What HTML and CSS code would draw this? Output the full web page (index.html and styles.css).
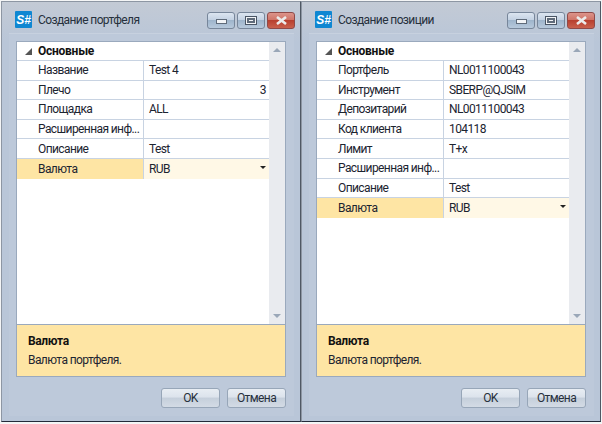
FILE: index.html
```html
<!DOCTYPE html>
<html lang="ru">
<head>
<meta charset="utf-8">
<title>Создание</title>
<link rel="stylesheet" href="styles.css">
</head>
<body>
<div class="desktop">
  <section class="window">
    <header class="titlebar">
      <svg class="logo" width="17" height="17" viewBox="0 0 17 17"><rect width="17" height="17" rx="1" fill="#0f87d2"/><text x="8.5" y="13" text-anchor="middle" class="logo-text">S#</text></svg>
      <span class="title">Создание портфеля</span>
      <span class="winbtn"><i class="glyph-min"></i></span>
      <span class="winbtn"><i class="glyph-max"></i></span>
      <span class="winbtn close"><svg width="13" height="9" viewBox="0 0 13 9"><path d="M2 1l9 7M11 1l-9 7" stroke="#ececec" stroke-width="2.6" fill="none"/></svg></span>
    </header>
    <div class="client">
      <div class="panel">
        <div class="grid-area">
          <div class="rows">
            <div class="group"><svg class="tri" width="7" height="7" viewBox="0 0 7 7"><path d="M7 0v7H0z" fill="#555"/></svg>Основные</div>
            <div class="row"><span class="k">Название</span><span class="v">Test 4</span></div>
            <div class="row"><span class="k">Плечо</span><span class="v right">3</span></div>
            <div class="row"><span class="k">Площадка</span><span class="v">ALL</span></div>
            <div class="row"><span class="k">Расширенная инф...</span><span class="v"></span></div>
            <div class="row"><span class="k">Описание</span><span class="v">Test</span></div>
            <div class="row selected"><span class="k">Валюта</span><span class="v">RUB<i class="caret"></i></span></div>
          </div>
          <div class="scrollbar"><i class="up"></i><i class="down"></i></div>
        </div>
        <div class="help"><b>Валюта</b><span>Валюта портфеля.</span></div>
      </div>
      <footer class="buttons"><button class="btn">OK</button><button class="btn">Отмена</button></footer>
    </div>
  </section>
  <section class="window">
    <header class="titlebar">
      <svg class="logo" width="17" height="17" viewBox="0 0 17 17"><rect width="17" height="17" rx="1" fill="#0f87d2"/><text x="8.5" y="13" text-anchor="middle" class="logo-text">S#</text></svg>
      <span class="title">Создание позиции</span>
      <span class="winbtn"><i class="glyph-min"></i></span>
      <span class="winbtn"><i class="glyph-max"></i></span>
      <span class="winbtn close"><svg width="13" height="9" viewBox="0 0 13 9"><path d="M2 1l9 7M11 1l-9 7" stroke="#ececec" stroke-width="2.6" fill="none"/></svg></span>
    </header>
    <div class="client">
      <div class="panel">
        <div class="grid-area">
          <div class="rows">
            <div class="group"><svg class="tri" width="7" height="7" viewBox="0 0 7 7"><path d="M7 0v7H0z" fill="#555"/></svg>Основные</div>
            <div class="row"><span class="k">Портфель</span><span class="v">NL0011100043</span></div>
            <div class="row"><span class="k">Инструмент</span><span class="v">SBERP@QJSIM</span></div>
            <div class="row"><span class="k">Депозитарий</span><span class="v">NL0011100043</span></div>
            <div class="row"><span class="k">Код клиента</span><span class="v">104118</span></div>
            <div class="row"><span class="k">Лимит</span><span class="v">T+x</span></div>
            <div class="row"><span class="k">Расширенная инф...</span><span class="v"></span></div>
            <div class="row"><span class="k">Описание</span><span class="v">Test</span></div>
            <div class="row selected"><span class="k">Валюта</span><span class="v">RUB<i class="caret"></i></span></div>
          </div>
          <div class="scrollbar"><i class="up"></i><i class="down"></i></div>
        </div>
        <div class="help"><b>Валюта</b><span>Валюта портфеля.</span></div>
      </div>
      <footer class="buttons"><button class="btn">OK</button><button class="btn">Отмена</button></footer>
    </div>
  </section>
</div>
</body>
</html>
```
FILE: styles.css
```css
* { box-sizing: border-box; }
html, body { margin: 0; padding: 0; }
body {
  width: 602px;
  height: 424px;
  overflow: hidden;
  background: #f4f5f6;
  font-family: Roboto, "Open Sans", sans-serif;
  font-size: 12px;
  letter-spacing: -0.6px;
  color: #1c2430;
}
.desktop { display: flex; padding: 1px 0 0 1px; }
.window {
  width: 300px;
  height: 421px;
  flex: none;
  display: flex;
  flex-direction: column;
  padding: 0 6px 5px 7px;
  background: linear-gradient(#c3cad5 0, #b9c6d8 40px);
  border: 1px solid #4f5864;
  border-left-color: #8d96a3;
  border-top-color: #8d96a3;
  border-bottom-color: #232a3a;
}
.titlebar {
  height: 31px;
  display: flex;
  align-items: center;
  flex: none;
  padding: 0 0 0 6px;
}
.logo { flex: none; margin-top: 4px; }
.logo-text { font: italic bold 12px "Liberation Sans", sans-serif; letter-spacing: 0; fill: #fff; }
.title { margin-left: 6px; margin-right: auto; margin-top: 5px; font-size: 12px; color: #26303c; }
.winbtn {
  width: 28px;
  height: 17px;
  flex: none;
  margin-left: 2px;
  margin-top: 5px;
  border: 1px solid #77869a;
  border-radius: 3px;
  display: flex;
  align-items: center;
  justify-content: center;
  background: linear-gradient(#dce5f0 0, #c4d2e3 45%, #9fb5cc 50%, #b7c9dc 100%);
}
.winbtn.close {
  margin-right: -1px;
  border-color: #8f4a48;
  background: linear-gradient(#dc938a 0, #cf7569 45%, #b8402f 50%, #c9604c 100%);
}
.glyph-min { display: block; width: 11px; height: 5px; margin-top: 3px; background: #f2f4f7; border: 1px solid #5f6b7a; }
.glyph-max { display: block; width: 12px; height: 9px; background: #f2f4f7; border: 1px solid #4a5666; box-shadow: inset 0 0 0 1px #f2f4f7, inset 0 0 0 3px #5f6b7a; }
.client {
  flex: 1;
  display: flex;
  flex-direction: column;
  padding: 7px 8px 0 7px;
  background: #bdc9da;
  border-top: 1px solid #c7d1df;
  min-height: 0;
}
.panel {
  height: 336px;
  flex: none;
  display: flex;
  flex-direction: column;
  border: 1px solid #9aa9bd;
  background: #fff;
}
.grid-area { flex: 1; display: flex; min-height: 0; }
.rows { flex: 1; min-width: 0; }
.group {
  height: 19px;
  display: flex;
  align-items: center;
  font-weight: 700;
  letter-spacing: -0.25px;
  color: #111;
  border-bottom: 1px solid #c8d3e2;
}
.tri { margin: 0 6px 0 8px; }
.row {
  height: 19.6px;
  display: flex;
  align-items: center;
  border-bottom: 1px solid #c8d3e2;
}
.k { width: 126px; padding-left: 21px; height: 100%; display: flex; align-items: center; white-space: nowrap; flex: none; }
.v { flex: 1; height: 100%; display: flex; align-items: center; padding: 0 3px 0 5px; border-left: 1px solid #c8d3e2; position: relative; }
.v.right { justify-content: flex-end; }
.selected { border-bottom: 0; }
.selected .k { background: #fee5a4; }
.selected .v { background: #fff8e6; }
.caret { position: absolute; right: 3px; top: 7px; border: 3.5px solid transparent; border-top: 3.5px solid #222; border-bottom: 0; }
.scrollbar {
  width: 16px;
  flex: none;
  position: relative;
  background: #e9ebef;
}
.up { position: absolute; left: 4px; top: 6px; border: 4px solid transparent; border-top: 0; border-bottom: 4px solid #9aa7b8; }
.down { position: absolute; left: 4px; bottom: 6px; border: 4px solid transparent; border-bottom: 0; border-top: 4px solid #9aa7b8; }
.help {
  height: 52px;
  flex: none;
  display: flex;
  flex-direction: column;
  gap: 4px;
  padding: 9px 11px;
  background: #fee5a4;
  border-top: 1px solid #9aa9bd;
  line-height: 15px;
}
.help b { color: #111; letter-spacing: -0.4px; }
.buttons { display: flex; justify-content: flex-end; gap: 7px; margin-top: 11px; }
.btn {
  width: 59px;
  height: 20px;
  padding: 0;
  border: 1px solid #97a6b8;
  border-radius: 3px;
  font: inherit;
  letter-spacing: inherit;
  color: #26303c;
  background: linear-gradient(#e8edf3 0, #dce3ec 45%, #c5cfdb 50%, #d3dbe5 100%);
}
```
